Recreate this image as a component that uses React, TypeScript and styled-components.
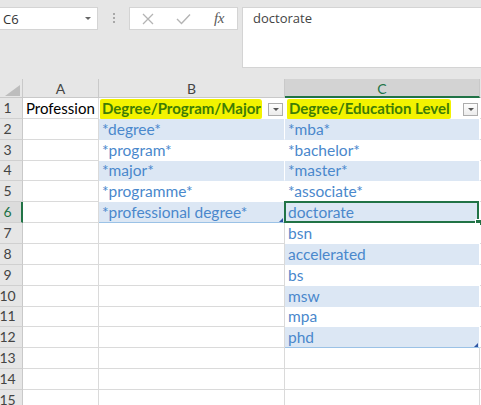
import React from 'react';
import styled, { createGlobalStyle } from 'styled-components';

const Global = createGlobalStyle`
  html, body { margin: 0; padding: 0; overflow: hidden; background: #e6e6e6; }
  body { width: 481px; height: 405px; font-family: Lato, "Liberation Sans", sans-serif; }
`;

const GREEN = '#217346';
const BAND = '#dce7f4';
const TABLE_TEXT = '#4a88cc';
const GRID = '#dadada';
const HEAD_LINE = '#c9c9c9';

const Page = styled.div`
  width: 481px;
  height: 405px;
  overflow: hidden;
  display: flex;
  flex-direction: column;
  background: #e6e6e6;
`;

const FormulaArea = styled.div`
  flex: none;
  height: 79px;
  box-sizing: border-box;
  padding-top: 7px;
  display: flex;
  align-items: flex-start;
  font-family: "Open Sans", sans-serif;
`;

const NameBox = styled.div`
  width: 98px;
  height: 23px;
  box-sizing: border-box;
  background: #fff;
  border: 1px solid #d4d4d4;
  border-left: none;
  display: flex;
  align-items: center;
  justify-content: space-between;
  padding: 0 6px 0 3px;
  font-size: 13px;
  color: #333;
`;

const Caret = styled.span`
  width: 0;
  height: 0;
  border-left: 3px solid transparent;
  border-right: 3px solid transparent;
  border-top: 3px solid #666;
`;

const Grip = styled.div`
  margin: 6px 0 0 15px;
  display: flex;
  flex-direction: column;
  gap: 2px;
`;

const GripDot = styled.span`
  width: 2px;
  height: 2px;
  background: #a8a8a8;
`;

const IconBox = styled.div`
  margin-left: 14px;
  width: 109px;
  height: 23px;
  box-sizing: border-box;
  background: #fff;
  border: 1px solid #d4d4d4;
  display: flex;
  align-items: center;
  padding-left: 12px;
  gap: 22px;
`;

const Fx = styled.span`
  font-family: "Liberation Serif", serif;
  font-style: italic;
  font-size: 15px;
  color: #5a5a5a;
  letter-spacing: -0.5px;
  margin-left: 1px;
`;

const FormulaInput = styled.div`
  margin-left: 4px;
  flex: 1;
  height: 61px;
  box-sizing: border-box;
  background: #fff;
  border: 1px solid #d4d4d4;
  border-right: none;
  padding: 1px 0 0 10px;
  font-size: 13px;
  color: #444;
`;

const Sheet = styled.div`
  flex: 1;
  display: grid;
  grid-template-columns: 23px 76px 186px 195px 1fr;
  grid-template-rows: 19px repeat(15, 20.86px);
  background: #fff;
  overflow: hidden;
`;

const Corner = styled.div`
  background: #e6e6e6;
  border-right: 1px solid ${HEAD_LINE};
  border-bottom: 1px solid ${HEAD_LINE};
  display: flex;
  align-items: flex-end;
  justify-content: flex-end;
  padding: 0 2px 1px 0;
`;

const ColHead = styled.div<{ $sel?: boolean }>`
  box-sizing: border-box;
  background: ${p => (p.$sel ? '#d3d3d3' : '#e6e6e6')};
  border-right: 1px solid ${HEAD_LINE};
  border-bottom: ${p => (p.$sel ? `2px solid ${GREEN}` : `1px solid ${HEAD_LINE}`)};
  display: flex;
  align-items: center;
  justify-content: center;
  font-size: 14px;
  color: ${p => (p.$sel ? GREEN : '#444')};
  padding-top: ${p => (p.$sel ? '1px' : '0')};
`;

const RowHead = styled.div<{ $sel?: boolean }>`
  box-sizing: border-box;
  background: ${p => (p.$sel ? '#dcdcdc' : '#e6e6e6')};
  border-right: ${p => (p.$sel ? `2px solid ${GREEN}` : `1px solid ${HEAD_LINE}`)};
  border-bottom: 1px solid #d0d0d0;
  display: flex;
  align-items: flex-end;
  justify-content: center;
  padding: 0 ${p => (p.$sel ? '6px' : '7px')} 1px 0;
  font-size: 14px;
  line-height: 18px;
  color: ${p => (p.$sel ? GREEN : '#444')};
`;

type Kind = 'plain' | 'band' | 'white';

const Cell = styled.div<{ $kind: Kind; $last?: boolean; $head?: boolean }>`
  position: relative;
  box-sizing: border-box;
  display: flex;
  align-items: flex-end;
  justify-content: ${p => (p.$head ? 'space-between' : 'flex-start')};
  padding: 0 ${p => (p.$head ? '1px' : '3px')} 1px 3px;
  font-size: ${p => (p.$kind === 'plain' ? '15px' : '15.5px')};
  line-height: 18px;
  white-space: nowrap;
  background: ${p => (p.$kind === 'band' ? BAND : '#fff')};
  color: ${p => (p.$kind === 'plain' ? '#000' : TABLE_TEXT)};
  border-right: 1px solid ${p => (p.$kind === 'plain' ? GRID : '#fff')};
  border-bottom: 1px solid
    ${p => (p.$last ? '#9bc2e6' : p.$kind === 'plain' ? GRID : 'transparent')};
`;

const Highlight = styled.span<{ $shift?: number }>`
  display: inline-block;
  background: #f3f300;
  color: #3f7d05;
  font-size: 15px;
  font-weight: 700;
  padding: 0 1px 2px 2px;
  margin: 0 0 -2px ${p => -2 + (p.$shift || 0)}px;
  border-radius: 2px 3px 2px 1px;
`;

const FilterButton = styled.span`
  width: 15px;
  height: 13px;
  box-sizing: border-box;
  margin-bottom: 1px;
  background: linear-gradient(#fdfdfd, #ececec);
  border: 1px solid #adadad;
  display: flex;
  align-items: center;
  justify-content: center;
`;

const FilterCaret = styled.span`
  width: 0;
  height: 0;
  border-left: 3px solid transparent;
  border-right: 3px solid transparent;
  border-top: 3px solid #555;
`;

const SelectionFrame = styled.span`
  position: absolute;
  inset: -1px 0 -1px -1px;
  border: 2px solid ${GREEN};
  pointer-events: none;
`;

const FillHandle = styled.span`
  position: absolute;
  right: -2px;
  bottom: -3px;
  width: 5px;
  height: 5px;
  background: ${GREEN};
  box-shadow: 0 0 0 1px #fff;
`;

const ResizeHandle = styled.span`
  position: absolute;
  right: 1px;
  bottom: 0;
  width: 0;
  height: 0;
  border-left: 4px solid transparent;
  border-bottom: 4px solid #2f55a4;
`;

const Filler = styled.div`
  background: #fff;
  border-bottom: 1px solid ${GRID};
`;

const HeadFiller = styled.div`
  background: #e6e6e6;
  border-bottom: 1px solid ${HEAD_LINE};
`;

const colB = ['*degree*', '*program*', '*major*', '*programme*', '*professional degree*'];
const colC = ['*mba*', '*bachelor*', '*master*', '*associate*', 'doctorate', 'bsn', 'accelerated', 'bs', 'msw', 'mpa', 'phd'];

function XIcon() {
  return (
    <svg width="12" height="12" viewBox="0 0 12 12">
      <path d="M1 1 L11 11 M11 1 L1 11" stroke="#b4b4b4" strokeWidth="1.3" fill="none" />
    </svg>
  );
}

function CheckIcon() {
  return (
    <svg width="15" height="12" viewBox="0 0 15 12">
      <path d="M1 6 L5.5 10.5 L14 1.5" stroke="#b4b4b4" strokeWidth="1.4" fill="none" />
    </svg>
  );
}

function CornerTriangle() {
  return (
    <svg width="15" height="11" viewBox="0 0 15 11">
      <path d="M15 0 L15 11 L0 11 Z" fill="#bdbdbd" />
    </svg>
  );
}

export default function App() {
  const rows = [];
  for (let r = 1; r <= 15; r++) {
    const band = r % 2 === 0;
    let b: React.ReactNode;
    let c: React.ReactNode;
    if (r === 1) {
      b = (
        <Cell $kind="white" $head key={`b${r}`}>
          <Highlight>Degree/Program/Major</Highlight>
          <FilterButton><FilterCaret /></FilterButton>
        </Cell>
      );
      c = (
        <Cell $kind="white" $head key={`c${r}`}>
          <Highlight $shift={1}>Degree/Education Level</Highlight>
          <FilterButton><FilterCaret /></FilterButton>
        </Cell>
      );
    } else {
      const bText = colB[r - 2];
      b =
        r <= 6 ? (
          <Cell $kind={band ? 'band' : 'white'} $last={r === 6} key={`b${r}`}>
            {bText}
            {r === 6 && <ResizeHandle />}
          </Cell>
        ) : (
          <Cell $kind="plain" key={`b${r}`} />
        );
      const cText = colC[r - 2];
      c =
        r <= 12 ? (
          <Cell $kind={band ? 'band' : 'white'} $last={r === 12} key={`c${r}`}>
            {cText}
            {r === 12 && <ResizeHandle />}
            {r === 6 && (
              <>
                <SelectionFrame />
                <FillHandle />
              </>
            )}
          </Cell>
        ) : (
          <Cell $kind="plain" key={`c${r}`} />
        );
    }
    rows.push(
      <React.Fragment key={r}>
        <RowHead $sel={r === 6}>{r}</RowHead>
        <Cell $kind="plain">{r === 1 ? 'Profession' : ''}</Cell>
        {b}
        {c}
        <Filler />
      </React.Fragment>
    );
  }

  return (
    <Page>
      <Global />
      <FormulaArea>
        <NameBox>
          <span>C6</span>
          <Caret />
        </NameBox>
        <Grip>
          <GripDot />
          <GripDot />
          <GripDot />
        </Grip>
        <IconBox>
          <XIcon />
          <CheckIcon />
          <Fx>fx</Fx>
        </IconBox>
        <FormulaInput>doctorate</FormulaInput>
      </FormulaArea>
      <Sheet>
        <Corner>
          <CornerTriangle />
        </Corner>
        <ColHead>A</ColHead>
        <ColHead>B</ColHead>
        <ColHead $sel>C</ColHead>
        <HeadFiller />
        {rows}
      </Sheet>
    </Page>
  );
}
